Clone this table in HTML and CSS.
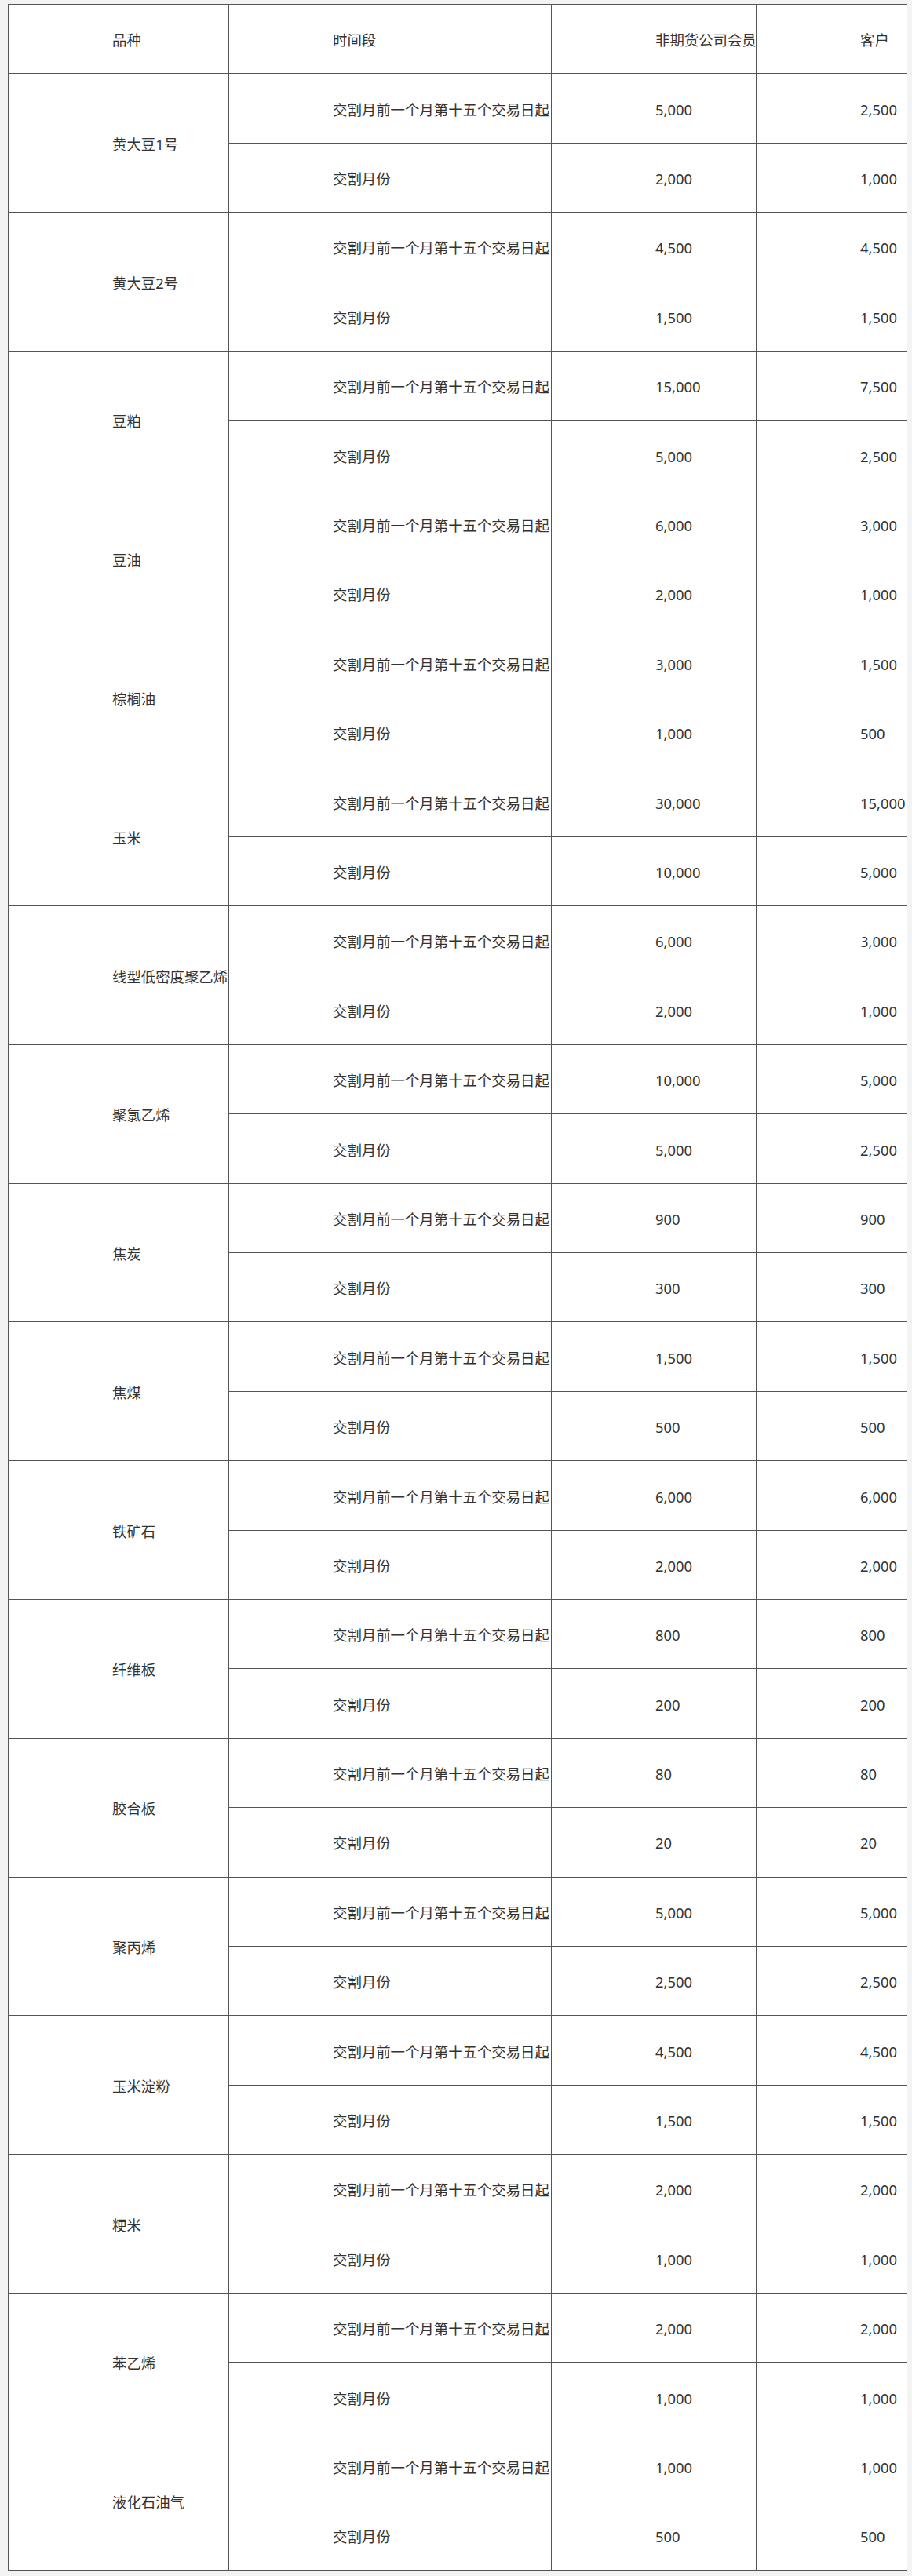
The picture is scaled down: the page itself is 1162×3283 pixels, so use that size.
FILE: index.html
```html
<!DOCTYPE html>
<html lang="zh-CN">
<head>
<meta charset="utf-8">
<title>限仓标准</title>
<link rel="stylesheet" href="styles.css">
</head>
<body>
<table class="limits">
  <colgroup>
    <col class="c-kind">
    <col class="c-period">
    <col class="c-member">
    <col class="c-client">
  </colgroup>
  <thead>
    <tr><th>品种</th><th>时间段</th><th>非期货公司会员</th><th>客户</th></tr>
  </thead>
  <tbody>
    <tr><td rowspan="2">黄大豆1号</td><td>交割月前一个月第十五个交易日起</td><td>5,000</td><td>2,500</td></tr>
    <tr><td>交割月份</td><td>2,000</td><td>1,000</td></tr>
    <tr><td rowspan="2">黄大豆2号</td><td>交割月前一个月第十五个交易日起</td><td>4,500</td><td>4,500</td></tr>
    <tr><td>交割月份</td><td>1,500</td><td>1,500</td></tr>
    <tr><td rowspan="2">豆粕</td><td>交割月前一个月第十五个交易日起</td><td>15,000</td><td>7,500</td></tr>
    <tr><td>交割月份</td><td>5,000</td><td>2,500</td></tr>
    <tr><td rowspan="2">豆油</td><td>交割月前一个月第十五个交易日起</td><td>6,000</td><td>3,000</td></tr>
    <tr><td>交割月份</td><td>2,000</td><td>1,000</td></tr>
    <tr><td rowspan="2">棕榈油</td><td>交割月前一个月第十五个交易日起</td><td>3,000</td><td>1,500</td></tr>
    <tr><td>交割月份</td><td>1,000</td><td>500</td></tr>
    <tr><td rowspan="2">玉米</td><td>交割月前一个月第十五个交易日起</td><td>30,000</td><td>15,000</td></tr>
    <tr><td>交割月份</td><td>10,000</td><td>5,000</td></tr>
    <tr><td rowspan="2">线型低密度聚乙烯</td><td>交割月前一个月第十五个交易日起</td><td>6,000</td><td>3,000</td></tr>
    <tr><td>交割月份</td><td>2,000</td><td>1,000</td></tr>
    <tr><td rowspan="2">聚氯乙烯</td><td>交割月前一个月第十五个交易日起</td><td>10,000</td><td>5,000</td></tr>
    <tr><td>交割月份</td><td>5,000</td><td>2,500</td></tr>
    <tr><td rowspan="2">焦炭</td><td>交割月前一个月第十五个交易日起</td><td>900</td><td>900</td></tr>
    <tr><td>交割月份</td><td>300</td><td>300</td></tr>
    <tr><td rowspan="2">焦煤</td><td>交割月前一个月第十五个交易日起</td><td>1,500</td><td>1,500</td></tr>
    <tr><td>交割月份</td><td>500</td><td>500</td></tr>
    <tr><td rowspan="2">铁矿石</td><td>交割月前一个月第十五个交易日起</td><td>6,000</td><td>6,000</td></tr>
    <tr><td>交割月份</td><td>2,000</td><td>2,000</td></tr>
    <tr><td rowspan="2">纤维板</td><td>交割月前一个月第十五个交易日起</td><td>800</td><td>800</td></tr>
    <tr><td>交割月份</td><td>200</td><td>200</td></tr>
    <tr><td rowspan="2">胶合板</td><td>交割月前一个月第十五个交易日起</td><td>80</td><td>80</td></tr>
    <tr><td>交割月份</td><td>20</td><td>20</td></tr>
    <tr><td rowspan="2">聚丙烯</td><td>交割月前一个月第十五个交易日起</td><td>5,000</td><td>5,000</td></tr>
    <tr><td>交割月份</td><td>2,500</td><td>2,500</td></tr>
    <tr><td rowspan="2">玉米淀粉</td><td>交割月前一个月第十五个交易日起</td><td>4,500</td><td>4,500</td></tr>
    <tr><td>交割月份</td><td>1,500</td><td>1,500</td></tr>
    <tr><td rowspan="2">粳米</td><td>交割月前一个月第十五个交易日起</td><td>2,000</td><td>2,000</td></tr>
    <tr><td>交割月份</td><td>1,000</td><td>1,000</td></tr>
    <tr><td rowspan="2">苯乙烯</td><td>交割月前一个月第十五个交易日起</td><td>2,000</td><td>2,000</td></tr>
    <tr><td>交割月份</td><td>1,000</td><td>1,000</td></tr>
    <tr><td rowspan="2">液化石油气</td><td>交割月前一个月第十五个交易日起</td><td>1,000</td><td>1,000</td></tr>
    <tr><td>交割月份</td><td>500</td><td>500</td></tr>
  </tbody>
</table>
</body>
</html>
```

FILE: styles.css
```css
html, body {
  margin: 0;
  padding: 0;
  background: #f3f3f3;
}

body {
  padding: 5px 0 0 10px;
  font-family: "Noto Sans", "Noto Sans CJK SC", sans-serif;
  font-size: 18.4px;
  color: #333;
}

.limits {
  border-collapse: collapse;
  table-layout: fixed;
  width: 1145px;
  background: #fff;
}

.c-kind { width: 281px; }
.c-period { width: 411px; }
.c-member { width: 261px; }
.c-client { width: 192px; }

.limits tr {
  height: 88.4px;
}

.limits th,
.limits td {
  border: 1px solid #555;
  padding: 3px 0 0 132px;
  text-align: left;
  vertical-align: middle;
  font-weight: normal;
  white-space: nowrap;
  line-height: 1.4;
}
```
